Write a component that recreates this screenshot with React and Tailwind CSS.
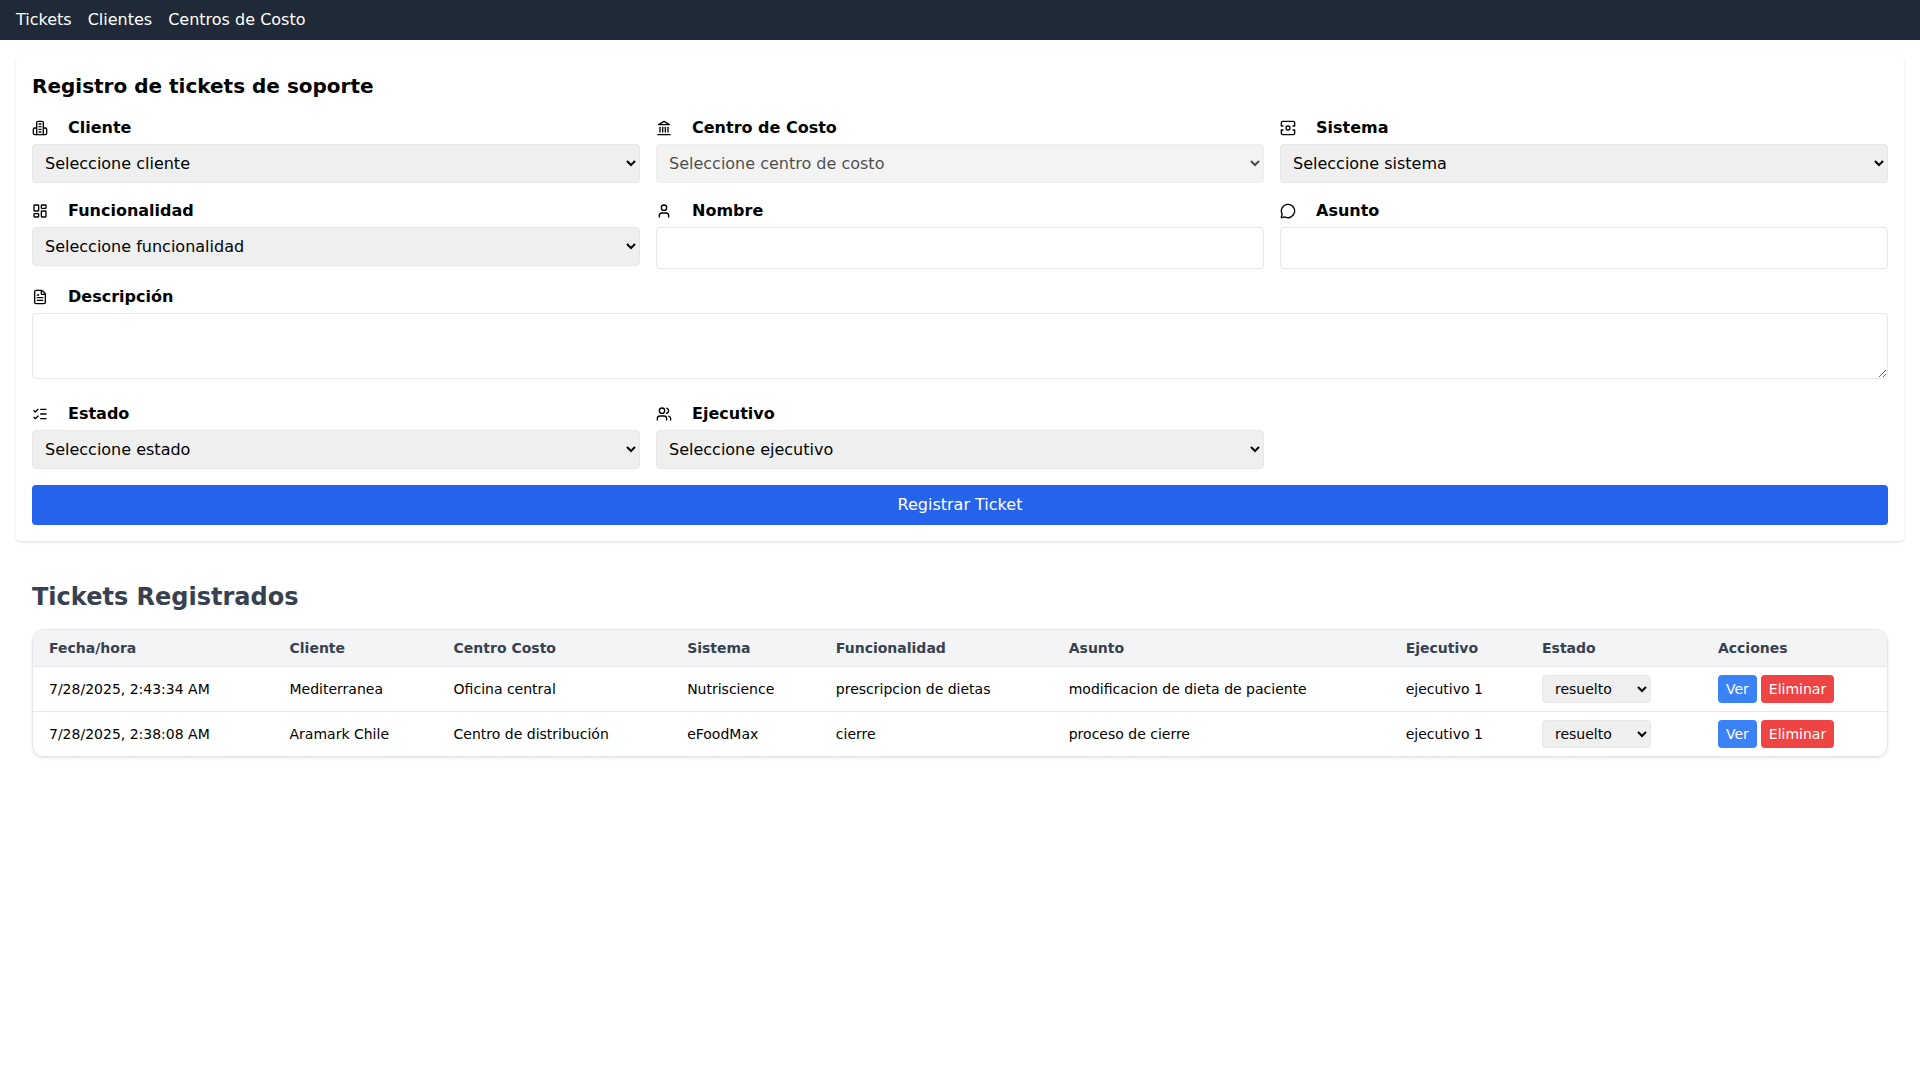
import React from "react";
import { LayoutDashboard, User, MessageCircle, FileText, ListChecks, Users } from "lucide-react";

function BuildingIcon(props) {
  return (
    <svg viewBox="0 0 24 24" width="16" height="16" fill="none" stroke="currentColor" strokeWidth="2" strokeLinecap="round" strokeLinejoin="round" {...props}>
      <path d="M7 22V4a2 2 0 0 1 2-2h6a2 2 0 0 1 2 2v18Z" />
      <path d="M7 12H4a2 2 0 0 0-2 2v6a2 2 0 0 0 2 2h3" />
      <path d="M17 12h3a2 2 0 0 1 2 2v6a2 2 0 0 1-2 2h-3" />
      <path d="M10.5 6h3" />
      <path d="M10.5 10h3" />
      <path d="M10.5 14h3" />
      <path d="M10.5 18h3" />
    </svg>
  );
}

function LandmarkIcon(props) {
  return (
    <svg viewBox="0 0 24 24" width="16" height="16" fill="none" stroke="currentColor" strokeWidth="2" strokeLinecap="round" strokeLinejoin="round" {...props}>
      <path d="M3 22h18" />
      <path d="M6 18v-7" />
      <path d="M10 18v-7" />
      <path d="M14 18v-7" />
      <path d="M18 18v-7" />
      <path d="M12 2l8 5H4z" />
    </svg>
  );
}

function SystemIcon(props) {
  return (
    <svg viewBox="0 0 24 24" width="16" height="16" fill="none" stroke="currentColor" strokeWidth="2" strokeLinecap="round" strokeLinejoin="round" {...props}>
      <path d="M4.5 9H2V4a2 2 0 0 1 2-2h16a2 2 0 0 1 2 2v5h-2.5" />
      <path d="M4.5 15H2v5a2 2 0 0 0 2 2h16a2 2 0 0 0 2-2v-5h-2.5" />
      <circle cx="12" cy="12" r="3" />
    </svg>
  );
}

function Label({ icon: Icon, children }) {
  return (
    <label className="flex items-center gap-5 mb-1 font-bold text-base text-black">
      <Icon width={16} height={16} strokeWidth={2} className="shrink-0" />
      {children}
    </label>
  );
}

function Sel({ children, disabled }) {
  return (
    <select disabled={disabled} className="w-full p-2 border border-[#e5e7eb] rounded bg-[#efefef] text-black disabled:opacity-70">
      <option>{children}</option>
    </select>
  );
}

function Inp() {
  return <input type="text" className="w-full p-2 border border-[#e5e7eb] rounded bg-white" />;
}

const rows = [
  ["7/28/2025, 2:43:34 AM", "Mediterranea", "Oficina central", "Nutriscience", "prescripcion de dietas", "modificacion de dieta de paciente", "ejecutivo 1"],
  ["7/28/2025, 2:38:08 AM", "Aramark Chile", "Centro de distribución", "eFoodMax", "cierre", "proceso de cierre", "ejecutivo 1"],
];
const heads = ["Fecha/hora", "Cliente", "Centro Costo", "Sistema", "Funcionalidad", "Asunto", "Ejecutivo", "Estado", "Acciones"];

export default function App() {
  return (
    <div className="min-h-screen bg-white text-black font-['DejaVu_Sans',sans-serif]">
      <nav className="h-10 bg-[#1f2937] text-white flex items-center gap-4 px-4">
        <a>Tickets</a>
        <a>Clientes</a>
        <a>Centros de Costo</a>
      </nav>
      <div className="m-4 p-4 bg-white rounded shadow">
        <h1 className="text-xl font-bold mb-4">Registro de tickets de soporte</h1>
        <div className="grid grid-cols-3 gap-4">
          <div><Label icon={BuildingIcon}>Cliente</Label><Sel>Seleccione cliente</Sel></div>
          <div><Label icon={LandmarkIcon}>Centro de Costo</Label><Sel disabled>Seleccione centro de costo</Sel></div>
          <div><Label icon={SystemIcon}>Sistema</Label><Sel>Seleccione sistema</Sel></div>
          <div><Label icon={LayoutDashboard}>Funcionalidad</Label><Sel>Seleccione funcionalidad</Sel></div>
          <div><Label icon={User}>Nombre</Label><Inp /></div>
          <div><Label icon={MessageCircle}>Asunto</Label><Inp /></div>
          <div className="col-span-3"><Label icon={FileText}>Descripción</Label><textarea rows={2} className="w-full p-2 border border-[#e5e7eb] rounded bg-white"></textarea></div>
          <div><Label icon={ListChecks}>Estado</Label><Sel>Seleccione estado</Sel></div>
          <div><Label icon={Users}>Ejecutivo</Label><Sel>Seleccione ejecutivo</Sel></div>
          <button className="col-span-3 h-10 bg-[#2563eb] text-white rounded">Registrar Ticket</button>
        </div>
      </div>
      <div className="px-8 pt-6">
        <h2 className="text-2xl font-bold text-[#374151] mb-4">Tickets Registrados</h2>
        <div className="rounded-xl border border-[#e5e7eb] shadow overflow-hidden">
          <table className="w-full text-sm text-left">
            <thead className="bg-[#f3f4f6] text-[#374151]">
              <tr>{heads.map((h) => <th key={h} className="px-4 py-2 font-bold">{h}</th>)}</tr>
            </thead>
            <tbody>
              {rows.map((r, i) => (
                <tr key={i} className="border-t border-[#e5e7eb]">
                  {r.map((c, j) => <td key={j} className="px-4 py-2">{c}</td>)}
                  <td className="px-4 py-2">
                    <select className="p-1 pl-2 w-[109px] border border-[#e5e7eb] rounded bg-[#efefef]"><option>resuelto</option></select>
                  </td>
                  <td className="px-4 py-2">
                    <div className="flex gap-1">
                      <button className="px-2 py-1 bg-[#3b82f6] text-white rounded">Ver</button>
                      <button className="px-2 py-1 bg-[#ef4444] text-white rounded">Eliminar</button>
                    </div>
                  </td>
                </tr>
              ))}
            </tbody>
          </table>
        </div>
      </div>
    </div>
  );
}
